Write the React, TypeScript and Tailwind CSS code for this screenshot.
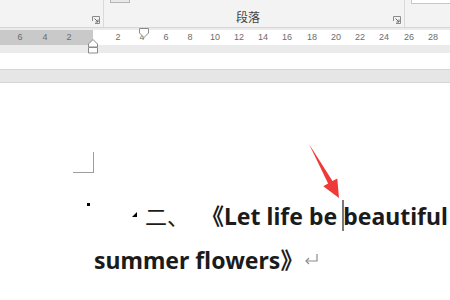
import React from "react"

const rulerNums = [
  { n: "6", x: 20 },
  { n: "4", x: 45 },
  { n: "2", x: 69 },
  { n: "2", x: 118 },
  { n: "4", x: 142 },
  { n: "6", x: 166 },
  { n: "8", x: 190 },
  { n: "10", x: 215 },
  { n: "12", x: 239 },
  { n: "14", x: 263 },
  { n: "16", x: 287 },
  { n: "18", x: 312 },
  { n: "20", x: 336 },
  { n: "22", x: 360 },
  { n: "24", x: 384 },
  { n: "26", x: 409 },
  { n: "28", x: 433 },
]

function Launcher() {
  return (
    <svg width="8" height="8" viewBox="0 0 8 8" className="block">
      <path d="M0.5 5V0.5H7.5V7.5H3" fill="none" stroke="#8a8a8a" strokeWidth="1" />
      <path d="M2.5 2.5L6 6M6 3.5V6H3.5" fill="none" stroke="#6a6a6a" strokeWidth="1" />
    </svg>
  )
}

function ReturnMark() {
  return (
    <svg width="15" height="12" viewBox="0 0 15 12" className="block">
      <path d="M13 1V8H2" fill="none" stroke="#8c8c8c" strokeWidth="1.2" />
      <path d="M5 5L2 8L5 11" fill="none" stroke="#8c8c8c" strokeWidth="1.2" />
    </svg>
  )
}

export default function App() {
  return (
    <div className="relative w-[450px] h-[300px] overflow-hidden bg-white font-['Noto_Sans','Noto_Sans_CJK_SC',sans-serif]">
      {/* ribbon */}
      <div className="flex h-[28px] bg-[#f3f3f3] border-b border-[#d6d6d6]">
        <div className="relative w-[104px] border-r border-[#d9d9d9]">
          <div className="absolute right-[3px] top-[16px]">
            <Launcher />
          </div>
        </div>
        <div className="relative w-[301px] border-r border-[#d9d9d9]">
          <div className="ml-[6px] w-[20px] h-[3px] border-x border-b border-[#b5b5b5] bg-[#e8e8e8]" />
          <div className="absolute left-[132px] top-[9px] text-[12px] leading-[16px] text-[#444] font-['Noto_Sans_CJK_SC',sans-serif]">
            段落
          </div>
          <div className="absolute right-[3px] top-[16px]">
            <Launcher />
          </div>
        </div>
        <div className="flex-1 pl-[6px]">
          <div className="h-[4px] border-l border-b border-[#c8c8c8] bg-white" />
        </div>
      </div>

      {/* ruler */}
      <div className="relative h-[25px] bg-[#ebebeb]">
        <div className="absolute left-0 right-0 top-[2px] h-[15px] flex">
          <div className="w-[93px] bg-[#c9c9c9]" />
          <div className="flex-1 bg-white" />
        </div>
        {rulerNums.map((r, i) => (
          <span
            key={i}
            className="absolute top-[4px] -translate-x-1/2 text-[9px] leading-[11px] text-[#6b6b6b] font-['Liberation_Sans',sans-serif]"
            style={{ left: r.x }}
          >
            {r.n}
          </span>
        ))}
        {/* first line indent */}
        <svg className="absolute left-[139px] top-0" width="10" height="10" viewBox="0 0 10 10">
          <path d="M0.5 0.5H9.5V5L5 9.5L0.5 5Z" fill="#fff" stroke="#8a8a8a" strokeWidth="1" />
        </svg>
        {/* hanging indent + left indent */}
        <svg className="absolute left-[88px] top-[11px]" width="10" height="15" viewBox="0 0 10 15">
          <path d="M0.5 8V5L5 0.5L9.5 5V8Z" fill="#fff" stroke="#8a8a8a" strokeWidth="1" />
          <path d="M0.5 8.5H9.5V14H0.5Z" fill="#fff" stroke="#8a8a8a" strokeWidth="1" />
        </svg>
      </div>

      <div className="h-[16px] bg-white" />
      <div className="h-[14px] bg-[#e6e6e6] border-y border-[#d5d5d5]" />

      {/* document */}
      <div className="relative h-[217px]">
        <div className="ml-[73px] mt-[69px] w-[21px] h-[21px] border-r border-b border-[#9d9d9d]" />

        <div className="mt-[27px] flex items-start h-[30px] pl-[87px] text-[23px] leading-[30px] text-[#1b1b1b] whitespace-nowrap">
          <span className="mt-[3px] w-[3px] h-[3px] bg-black" />
          <span className="mt-[12px] ml-[42px] w-0 h-0 border-l-[5px] border-l-transparent border-b-[5px] border-b-black" />
          <span className="ml-[8px] font-['Noto_Sans_CJK_SC',sans-serif] font-normal text-[22px]">二、</span>
          <span className="ml-[12px] font-bold">
            <span className="font-['Noto_Sans_CJK_SC',sans-serif]">《</span>Let life be{" "}
            <span className="inline-block align-top w-[1.5px] h-[31px] -mx-[0.75px] bg-[#7a7a7a]" />
            beautiful
          </span>
        </div>

        <div className="mt-[14px] flex items-start h-[30px] pl-[94px] text-[23px] leading-[30px] text-[#1b1b1b] whitespace-nowrap">
          <span className="font-bold">
            summer flowers<span className="font-['Noto_Sans_CJK_SC',sans-serif]">》</span>
          </span>
          <span className="ml-[1px] mt-[9px]">
            <ReturnMark />
          </span>
        </div>

        <div className="absolute right-[6px] top-[178px] text-[18px] leading-[20px] font-bold text-[#efefef] font-['Liberation_Sans',sans-serif]">
          Baidu
        </div>
      </div>

      {/* red annotation arrow */}
      <svg className="absolute left-0 top-0 pointer-events-none" width="450" height="300" viewBox="0 0 450 300">
        <path d="M309 144L332.5 181.1L337.3 178.4L339 198L323.3 186.2L328.1 183.5Z" fill="#ef3a3a" />
      </svg>
    </div>
  )
}
